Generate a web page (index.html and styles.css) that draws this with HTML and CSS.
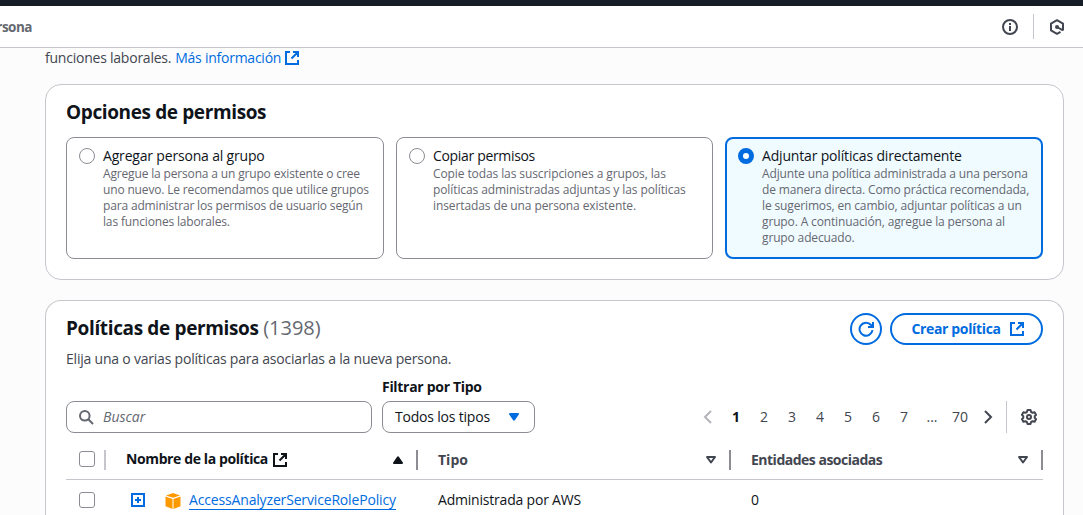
FILE: index.html
```html
<!DOCTYPE html>
<html lang="es">
<head>
<meta charset="utf-8">
<title>Permisos</title>
<link rel="stylesheet" href="styles.css">
</head>
<body>
<svg class="defs" width="0" height="0">
  <symbol id="external" viewBox="0 0 16 16"><path d="M6 2H2v12h12v-4M9 2h5v5M14 2L7.500 8.500" fill="none" stroke="currentColor" stroke-width="2"/></symbol>
  <symbol id="sort" viewBox="0 0 16 16"><path d="M4 5h8l-4 5.500z" fill="none" stroke="currentColor" stroke-width="2" stroke-linejoin="round"/></symbol>
</svg>
<div class="topbar"></div>
<header class="crumbs">
  <span class="crumb">persona</span>
  <div class="tools">
    <svg class="icon" viewBox="0 0 16 16"><circle cx="8" cy="8" r="7" fill="none" stroke="currentColor" stroke-width="2"/><path d="M8 7v5M8 4v2" fill="none" stroke="currentColor" stroke-width="2"/></svg>
    <span class="tools-line"></span>
    <svg class="icon" viewBox="0 0 16 16"><path d="M14 11.500V4.600L8 1.200 2 4.600v6.800l6 3.400 3.500-2" fill="none" stroke="currentColor" stroke-width="2" stroke-linejoin="round"/><circle cx="8" cy="8" r="2" fill="currentColor"/><path d="M8 8l6 3.400" stroke="currentColor" stroke-width="2"/></svg>
  </div>
</header>
<main class="content">
  <p class="intro"><span class="t-intro">funciones laborales.</span> <a class="link t-more">Más información</a><svg class="icon link"><use href="#external"/></svg></p>
  <section class="card options">
    <h2 class="title t-options">Opciones de permisos</h2>
    <div class="tiles">
      <div class="tile">
        <span class="radio"></span>
        <div><div class="tile-label t-l1">Agregar persona al grupo</div>
        <div class="tile-text t-d1">Agregue la persona a un grupo existente o cree<br>uno nuevo. Le recomendamos que utilice grupos<br>para administrar los permisos de usuario según<br>las funciones laborales.</div></div>
      </div>
      <div class="tile">
        <span class="radio"></span>
        <div><div class="tile-label t-l2">Copiar permisos</div>
        <div class="tile-text t-d2">Copie todas las suscripciones a grupos, las<br>políticas administradas adjuntas y las políticas<br>insertadas de una persona existente.</div></div>
      </div>
      <div class="tile selected">
        <span class="radio"></span>
        <div><div class="tile-label t-l3">Adjuntar políticas directamente</div>
        <div class="tile-text t-d3">Adjunte una política administrada a una persona<br>de manera directa. Como práctica recomendada,<br>le sugerimos, en cambio, adjuntar políticas a un<br>grupo. A continuación, agregue la persona al<br>grupo adecuado.</div></div>
      </div>
    </div>
  </section>
  <section class="card policies">
    <div class="head">
      <h2 class="title t-policies">Políticas de permisos <span class="count">(1398)</span></h2>
      <div class="actions">
        <span class="button round"><svg class="icon" viewBox="0 0 16 16"><path d="M14.500 9.200A6.500 6.500 0 1 1 13 4L14.500 6M15 1v5h-5" fill="none" stroke="currentColor" stroke-width="2"/></svg></span>
        <span class="button create"><span class="t-create">Crear política</span><svg class="icon"><use href="#external"/></svg></span>
      </div>
    </div>
    <p class="desc t-desc">Elija una o varias políticas para asociarlas a la nueva persona.</p>
    <div class="filters">
      <div class="field search"><svg class="icon" viewBox="0 0 16 16"><circle cx="6.800" cy="6.800" r="4.800" fill="none" stroke="currentColor" stroke-width="2"/><path d="M10.300 10.300L15 15" stroke="currentColor" stroke-width="2"/></svg><span class="t-search">Buscar</span></div>
      <div class="type">
        <div class="type-label t-filter">Filtrar por Tipo</div>
        <div class="field select"><span class="t-all">Todos los tipos</span><svg class="icon link" viewBox="0 0 16 16"><path d="M4 5h8l-4 5.800z" fill="currentColor" stroke="currentColor" stroke-width="2" stroke-linejoin="round"/></svg></div>
      </div>
      <div class="pager">
        <svg class="icon disabled" viewBox="0 0 16 16"><path d="M11 2L5 8l6 6" fill="none" stroke="currentColor" stroke-width="2"/></svg>
        <span class="page current">1</span><span class="page">2</span><span class="page">3</span><span class="page">4</span><span class="page">5</span><span class="page">6</span><span class="page">7</span><span class="page">...</span><span class="page">70</span>
        <svg class="icon" viewBox="0 0 16 16"><path d="M5 2l6 6-6 6" fill="none" stroke="currentColor" stroke-width="2"/></svg>
        <span class="pager-line"></span>
        <svg class="icon" viewBox="0 0 16 16"><path d="M6.500 1h3l.6 2 1.500.8 2-.5 1.500 2.600L13.700 7.300v1.400l1.400 1.400-1.500 2.600-2-.5-1.500.8-.6 2h-3l-.6-2-1.500-.8-2 .5L.9 10.100l1.400-1.400V7.300L.9 5.900l1.500-2.600 2 .5 1.500-.8z" fill="none" stroke="currentColor" stroke-width="2" stroke-linejoin="round"/><circle cx="8" cy="8" r="2" fill="none" stroke="currentColor" stroke-width="2"/></svg>
      </div>
    </div>
    <div class="row header">
      <div class="cell check"><span class="box"></span></div>
      <div class="cell name active"><span class="t-name">Nombre de la política</span><svg class="icon"><use href="#external"/></svg><svg class="icon end" viewBox="0 0 16 16"><path d="M4 11h8L8 5.200z" fill="currentColor" stroke="currentColor" stroke-width="2" stroke-linejoin="round"/></svg></div>
      <div class="cell"><span class="t-type">Tipo</span><svg class="icon end"><use href="#sort"/></svg></div>
      <div class="cell"><span class="t-ent">Entidades asociadas</span><svg class="icon end"><use href="#sort"/></svg></div>
    </div>
    <div class="row">
      <div class="cell check"><span class="box"></span></div>
      <div class="cell name"><svg class="icon plus" viewBox="0 0 16 16"><path d="M2 2h12v12H2zM8 5v6M5 8h6" fill="none" stroke="currentColor" stroke-width="2"/></svg><svg class="icon cube" viewBox="0 0 16 16"><path d="M8 0l7 2.400L8 4.800 1 2.400zM.5 3.500L7.500 6v10L.5 13.300zM15.500 3.500L8.500 6v10l7-2.700z" fill="#ff9900"/></svg><a class="policy t-policy">AccessAnalyzerServiceRolePolicy</a></div>
      <div class="cell"><span class="t-admin">Administrada por AWS</span></div>
      <div class="cell"><span>0</span></div>
    </div>
  </section>
</main>
</body>
</html>
```
FILE: styles.css
```css
* { box-sizing: border-box; }
body { margin: 0; height: 515px; overflow: hidden; background: #fcfcfd; color: #0f141a; font: 14px/20px "Open Sans", sans-serif; white-space: nowrap; }
h2, p { margin: 0; }
.defs { display: block; height: 0; }
.icon { width: 16px; height: 16px; flex: none; display: block; }
.link { color: #006ce0; }
.topbar { height: 6px; background: #161d26; }
.crumbs { height: 42px; background: #fff; border-bottom: 1px solid #c6c6cd; display: flex; align-items: center; justify-content: space-between; padding-right: 18px; color: #424650; }
.crumb { width: 32px; display: flex; justify-content: flex-end; overflow: hidden; font-weight: 700; color: #656871; font-size: 13.5px; letter-spacing: -0.5px; }
.tools { display: flex; align-items: center; gap: 15px; }
.tools-line { width: 1px; height: 25px; background: #c6c6cd; }
.content { padding: 0 19px 0 45px; }
.intro { display: flex; align-items: center; height: 20px; color: #424650; }
.intro .link { margin-left: 4px; }
.intro .icon { margin-left: 3px; }
.card { background: #fff; border: 1px solid #c6c6cd; border-radius: 16px; padding: 0 20px; }
.options { margin-top: 16px; height: 196px; padding-top: 15px; }
.title { font-size: 19px; line-height: 24px; font-weight: 700; }
.tiles { display: grid; grid-template-columns: 318px 317px 318px; gap: 12px; margin-top: 13px; height: 122px; }
.tile { border: 1px solid #8c8c94; border-radius: 8px; padding: 8px 12px; display: flex; gap: 8px; }
.selected { border: 2px solid #006ce0; background: #f0fbff; padding: 7px 11px; }
.radio { width: 16px; height: 16px; border: 1px solid #8c8c94; border-radius: 50%; background: #fff; margin-top: 2px; flex: none; }
.selected .radio { border: 5px solid #006ce0; }
.tile-text { font-size: 12px; line-height: 16px; color: #656871; }
.policies { margin-top: 20px; height: 215px; padding-top: 12px; border-bottom: 0; border-radius: 16px 16px 0 0; }
.head { display: flex; justify-content: space-between; height: 32px; }
.head .title { padding-top: 3px; }
.count { font-size: 20px; font-weight: 400; color: #656871; letter-spacing: 0; }
.actions { display: flex; gap: 8px; }
.button { height: 32px; border: 2px solid #006ce0; border-radius: 16px; color: #006ce0; font-weight: 700; display: flex; align-items: center; justify-content: center; }
.round { width: 32px; }
.create { width: 153px; gap: 8px; padding-left: 3px; }
.desc { margin-top: 4px; color: #424650; }
.filters { display: flex; align-items: flex-end; margin-top: 8px; height: 56px; }
.field { height: 32px; border: 1px solid #8c8c94; border-radius: 8px; display: flex; align-items: center; background: #fff; }
.search { width: 306px; padding-left: 11px; gap: 9px; font-style: italic; color: #656871; }
.type { margin-left: 10px; }
.type-label { font-weight: 700; margin-bottom: 4px; }
.select { width: 153px; padding: 0 12px; justify-content: space-between; }
.pager { margin-left: auto; height: 32px; display: flex; align-items: center; color: #424650; margin-right: 6px; }
.page { width: 28px; text-align: center; }
.pager > .page:nth-child(2) { margin-left: 6px; }
.pager > .page:nth-child(10) { margin-right: 6px; }
.current { font-weight: 700; color: #0f141a; }
.disabled { color: #b4b4bb; }
.pager-line { width: 1px; height: 32px; background: #c6c6cd; margin: 0 14px 0 10px; }
.row { display: grid; grid-template-columns: 40px 312px 313px 312px; height: 34px; padding-top: 6px; align-items: center; }
.header { height: 47px; padding-top: 7px; border-bottom: 1px solid #c6c6cd; font-weight: 700; color: #424650; }
.cell { display: flex; align-items: center; padding-left: 20px; height: 20px; }
.header .cell { border-right: 2px solid #8c8c94; }
.header .check { border-color: #c6c6cd; }
.check.check { padding-left: 13px; }
.check .box { margin-bottom: 1px; }
.active { color: #0f141a; }
.active > span { margin-top: -1px; }
.active > .icon:nth-child(2) { margin-left: 4px; }
.end { margin-left: auto; margin-right: 10px; }
.box { width: 16px; height: 16px; border: 1px solid #8c8c94; border-radius: 3px; background: #fff; }
.plus { color: #006ce0; margin: -1px 0 0 4px; }
.cube { margin: 1px 8px 0 19px; }
.policy { color: #006ce0; border-bottom: 1px solid #006ce0; line-height: 19px; }

/* Tracking */
.t-intro { letter-spacing: -0.23px; }
.t-more { letter-spacing: -0.25px; }
.t-options { letter-spacing: -0.38px; }
.t-policies { letter-spacing: -0.36px; }
.t-l1 { letter-spacing: -0.18px; }
.t-l2 { letter-spacing: -0.33px; }
.t-l3 { letter-spacing: -0.17px; }
.t-d1 { letter-spacing: -0.16px; }
.t-d2 { letter-spacing: -0.1px; }
.t-d3 { letter-spacing: -0.14px; }
.t-create { letter-spacing: -0.35px; }
.t-desc { letter-spacing: -0.21px; }
.t-filter { letter-spacing: -0.3px; }
.t-all { letter-spacing: -0.2px; }
.t-name { letter-spacing: -0.39px; }
.t-ent { letter-spacing: -0.5px; }
.t-admin { letter-spacing: -0.2px; }
.t-policy { letter-spacing: -0.16px; }
```
